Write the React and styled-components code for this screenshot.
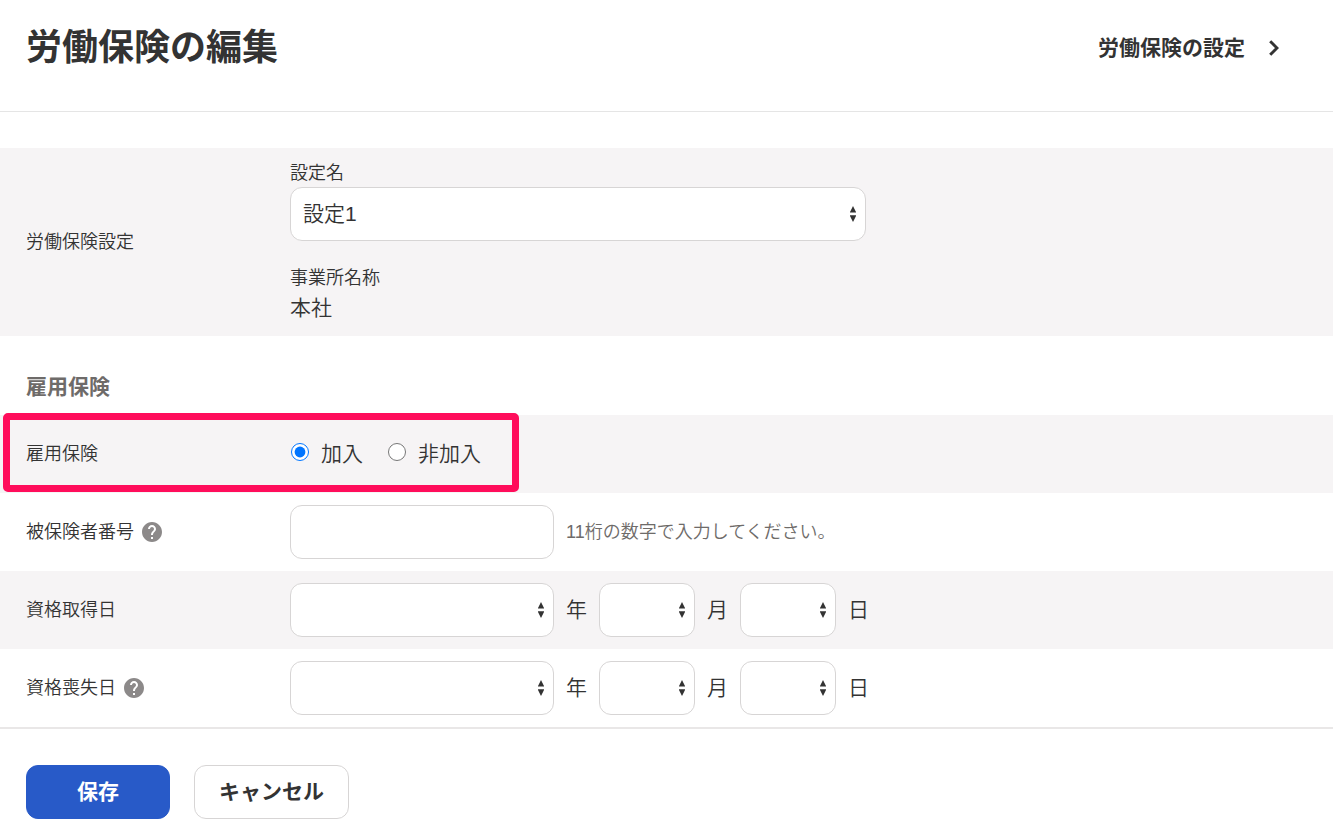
import React, { useState } from 'react';
import styled, { createGlobalStyle } from 'styled-components';
import { MdHelp } from 'react-icons/md';

const GlobalStyle = createGlobalStyle`
  * {
    box-sizing: border-box;
  }

  body {
    margin: 0;
    background: #fff;
    color: #333;
    font-family: "Liberation Sans", "Noto Sans CJK JP", sans-serif;
    font-size: 21px;
    font-weight: 350;
    line-height: 32px;
  }

  button, input, select {
    font: inherit;
    color: inherit;
  }
`;

const Header = styled.header`
  display: flex;
  align-items: center;
  justify-content: space-between;
  padding: 21px 54px 36px 26px;
  border-bottom: 1px solid #e5e5e5;
`;

const Title = styled.h1`
  margin: 0;
  font-size: 36px;
  line-height: 54px;
  font-weight: 700;
`;

const SettingsLink = styled.a`
  display: flex;
  align-items: center;
  gap: 24px;
  color: inherit;
  font-weight: 700;
  text-decoration: none;
`;

const Form = styled.form`
  padding-top: 36px;
`;

const SectionTitle = styled.h2`
  margin: 0;
  padding: 35px 26px 12px;
  font-size: 21px;
  line-height: 32px;
  font-weight: 700;
  color: #6e6b69;
`;

const Row = styled.div`
  position: relative;
  display: grid;
  grid-template-columns: 264px 1fr;
  align-items: center;
  min-height: 78px;
  padding: 12px 26px;
  background: ${props => (props.$shaded ? '#f6f4f5' : '#fff')};
`;

const RowLabel = styled.div`
  display: flex;
  align-items: center;
  gap: 6px;
  font-size: 18px;
  line-height: 27px;
`;

const HelpButton = styled.button`
  display: flex;
  padding: 0;
  border: 0;
  background: none;
  color: #8c8989;
  cursor: pointer;
`;

const Stack = styled.div`
  display: flex;
  flex-direction: column;
  gap: 24px;
`;

const FieldLabel = styled.label`
  display: block;
  font-size: 18px;
  line-height: 27px;
`;

const Inline = styled.div`
  display: flex;
  align-items: center;
  gap: 12px;
`;

const TextInput = styled.input`
  width: 264px;
  height: 54px;
  padding: 0 12px;
  border: 1px solid #d7d5d5;
  border-radius: 12px;
  background: #fff;
`;

const Hint = styled.span`
  font-size: 18px;
  line-height: 27px;
  color: #6e6b69;
`;

const SelectBox = styled.div`
  position: relative;
  width: ${props => props.$width}px;
  max-width: 100%;

  svg {
    position: absolute;
    top: 19px;
    right: 10px;
    pointer-events: none;
  }
`;

const NativeSelect = styled.select`
  display: block;
  appearance: none;
  width: 100%;
  height: 54px;
  padding: 0 30px 0 12px;
  border: 1px solid #d7d5d5;
  border-radius: 12px;
  background: #fff;
`;

const RadioGroup = styled.div`
  display: flex;
  gap: 24px;
`;

const RadioLabel = styled.label`
  display: flex;
  align-items: center;
  gap: 12px;

  input {
    width: 18px;
    height: 18px;
    margin: 0 0 4px 1px;
  }
`;

const Highlight = styled.div`
  position: absolute;
  top: -2px;
  left: 3px;
  width: 516px;
  height: 79px;
  border: 7px solid #ff0d5b;
  border-radius: 5px;
  pointer-events: none;
`;

const Actions = styled.footer`
  display: flex;
  gap: 24px;
  padding: 36px 26px 20px;
  border-top: 2px solid #e9e7e7;
`;

const Button = styled.button`
  height: 54px;
  min-width: 144px;
  padding: 0 24px;
  border: 1px solid ${props => (props.$primary ? '#285ac8' : '#d7d5d5')};
  border-radius: 12px;
  background: ${props => (props.$primary ? '#285ac8' : '#fff')};
  color: ${props => (props.$primary ? '#fff' : '#333')};
  font-weight: 700;
  cursor: pointer;
`;

const Select = ({ width, children, ...rest }) => (
  <SelectBox $width={width}>
    <NativeSelect {...rest}>{children}</NativeSelect>
    <svg width="6" height="16" viewBox="0 0 6 16" fill="#333" aria-hidden="true">
      <path d="M3 0L6.3 6.5H-.3zM-.3 9.3h6.6L3 16z" />
    </svg>
  </SelectBox>
);

const range = (from, to) => Array.from({ length: to - from + 1 }, (_, i) => from + i);

const dateParts = [
  { unit: '年', width: 264, options: range(1990, 2030) },
  { unit: '月', width: 96, options: range(1, 12) },
  { unit: '日', width: 96, options: range(1, 31) },
];

const DateFields = ({ id, label }) => (
  <Inline role="group" aria-label={label}>
    {dateParts.map((part, index) => (
      <React.Fragment key={part.unit}>
        <Select width={part.width} id={`${id}-${index}`} defaultValue="">
          <option value="" />
          {part.options.map(value => (
            <option key={value} value={value}>{value}</option>
          ))}
        </Select>
        <label htmlFor={`${id}-${index}`}>{part.unit}</label>
      </React.Fragment>
    ))}
  </Inline>
);

const Help = () => (
  <HelpButton type="button" aria-label="ヘルプ">
    <MdHelp size={24} />
  </HelpButton>
);

const App = () => {
  const [joined, setJoined] = useState('yes');

  return (
    <>
      <GlobalStyle />
      <Header>
        <Title>労働保険の編集</Title>
        <SettingsLink href="#settings">
          労働保険の設定
          <svg width="10" height="16" viewBox="0 0 10 16" fill="none" stroke="currentColor" strokeWidth="3" aria-hidden="true">
            <path d="M1.2 1.2L8 8l-6.8 6.8" />
          </svg>
        </SettingsLink>
      </Header>

      <Form onSubmit={e => e.preventDefault()}>
        <Row $shaded>
          <RowLabel>労働保険設定</RowLabel>
          <Stack>
            <div>
              <FieldLabel htmlFor="setting">設定名</FieldLabel>
              <Select width={576} id="setting">
                <option>設定1</option>
              </Select>
            </div>
            <div>
              <FieldLabel as="div">事業所名称</FieldLabel>
              <div>本社</div>
            </div>
          </Stack>
        </Row>

        <SectionTitle>雇用保険</SectionTitle>

        <Row $shaded>
          <RowLabel id="joined-label">雇用保険</RowLabel>
          <RadioGroup role="radiogroup" aria-labelledby="joined-label">
            <RadioLabel>
              <input type="radio" name="joined" checked={joined === 'yes'} onChange={() => setJoined('yes')} />
              加入
            </RadioLabel>
            <RadioLabel>
              <input type="radio" name="joined" checked={joined === 'no'} onChange={() => setJoined('no')} />
              非加入
            </RadioLabel>
          </RadioGroup>
          <Highlight />
        </Row>

        <Row>
          <RowLabel>
            <label htmlFor="number">被保険者番号</label>
            <Help />
          </RowLabel>
          <Inline>
            <TextInput id="number" type="text" />
            <Hint>11桁の数字で入力してください。</Hint>
          </Inline>
        </Row>

        <Row $shaded>
          <RowLabel>資格取得日</RowLabel>
          <DateFields id="acquired" label="資格取得日" />
        </Row>

        <Row>
          <RowLabel>
            資格喪失日
            <Help />
          </RowLabel>
          <DateFields id="lost" label="資格喪失日" />
        </Row>

        <Actions>
          <Button type="submit" $primary>保存</Button>
          <Button type="button">キャンセル</Button>
        </Actions>
      </Form>
    </>
  );
};

export default App;
